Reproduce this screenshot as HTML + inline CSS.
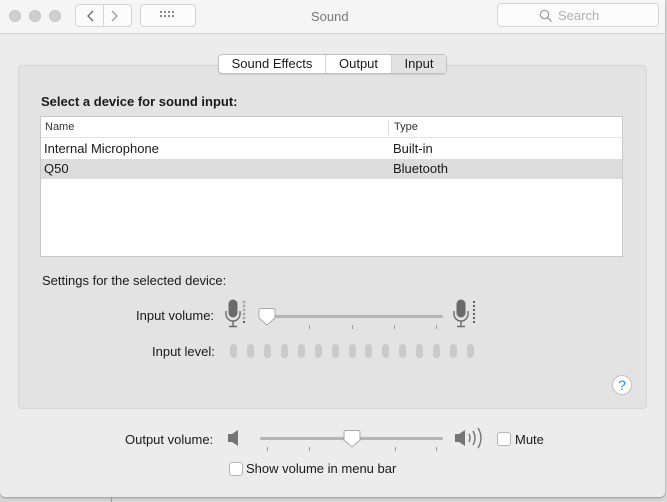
<!DOCTYPE html>
<html><head><meta charset="utf-8"><style>
*{margin:0;padding:0;box-sizing:border-box}
body{width:667px;height:502px;background:#d6d6d6;font-family:"Liberation Sans",sans-serif;font-size:13px;color:#1a1a1a;position:relative;overflow:hidden}
.win{position:absolute;left:0;top:0;width:665px;height:497px;background:#ececec;border-radius:0 0 5px 5px;box-shadow:0 1px 2px rgba(0,0,0,.3)}
.tb{position:absolute;left:0;top:0;width:665px;height:34px;background:#f5f5f5;border-bottom:1px solid #d3d3d3}
.dot{position:absolute;top:10px;width:12px;height:12px;border-radius:50%;background:#d0d0d0;border:1px solid #c4c4c4}
.btn{position:absolute;border:1px solid #d4d4d4;border-radius:4px;background:#fbfbfb}
.abs{position:absolute}
.panel{position:absolute;left:18px;top:65px;width:629px;height:344px;background:#e3e3e3;border:1px solid #d6d6d6;border-radius:4px}
.tabs{position:absolute;left:218px;top:54px;height:20px;width:229px;border:1px solid #c0c0c0;border-radius:4px;background:#fff;display:flex;box-shadow:0 1px 1px rgba(0,0,0,.1)}
.tabs div{height:18px;line-height:18px;text-align:center;font-size:13px;border-right:1px solid #d0d0d0}
.table{position:absolute;left:40px;top:116px;width:583px;height:141px;background:#fff;border:1px solid #c8c8c8}
.row{position:absolute;left:0;width:581px;height:20px;line-height:20px}
.lbl{position:absolute;font-size:13px}
.pill{position:absolute;top:344px;width:7px;height:14px;border-radius:3.5px;background:#cacaca}
.tick{position:absolute;width:1px;height:4px;background:#9a9a9a}
.cb{position:absolute;width:14px;height:14px;border:1px solid #b5b5b5;border-radius:3px;background:#fff}
</style></head><body>
<div class="win">
<div class="tb">
<div class="dot" style="left:9px"></div><div class="dot" style="left:29px"></div><div class="dot" style="left:49px"></div>
<div class="btn" style="left:75px;top:4px;width:57px;height:23px"></div>
<div class="abs" style="left:103px;top:4px;width:1px;height:23px;background:#d4d4d4"></div>
<svg class="abs" style="left:83px;top:8px" width="44" height="16"><path d="M10 3 L5 8 L10 13" stroke="#666" stroke-width="1.3" fill="none"/><path d="M29 3 L34 8 L29 13" stroke="#999" stroke-width="1.3" fill="none"/></svg>
<div class="btn" style="left:140px;top:4px;width:56px;height:23px"></div>
<svg class="abs" style="left:160px;top:11px" width="16" height="10"><g fill="#888"><rect x="0" y="0" width="2" height="2"/><rect x="4" y="0" width="2" height="2"/><rect x="8" y="0" width="2" height="2"/><rect x="12" y="0" width="2" height="2"/><rect x="0" y="4" width="2" height="2"/><rect x="4" y="4" width="2" height="2"/><rect x="8" y="4" width="2" height="2"/><rect x="12" y="4" width="2" height="2"/></g></svg>
<div class="lbl" style="left:311px;top:9px;color:#777;font-size:13px">Sound</div>
<div class="btn" style="left:497px;top:3px;width:162px;height:24px"></div>
<svg class="abs" style="left:539px;top:9px" width="14" height="14"><circle cx="5.5" cy="5.5" r="4.2" stroke="#999" stroke-width="1.2" fill="none"/><path d="M8.5 8.5 L12.5 12.5" stroke="#999" stroke-width="1.3"/></svg>
<div class="lbl" style="left:558px;top:8px;color:#b0b0b0">Search</div>
</div>
<div class="panel"></div>
<div class="tabs"><div style="width:107px">Sound Effects</div><div style="width:66px">Output</div><div style="width:54px;border:0;background:#e2e2e2">Input</div></div>
<div class="lbl" style="left:41px;top:94px;font-weight:bold">Select a device for sound input:</div>
<div class="table">
<div class="row" style="top:0;height:21px;border-bottom:1px solid #e2e2e2;font-size:11px;color:#333"><span class="abs" style="left:4px">Name</span><span class="abs" style="left:347px;top:3px;width:1px;height:15px;background:#ddd"></span><span class="abs" style="left:353px">Type</span></div>
<div class="row" style="top:22px"><span class="abs" style="left:3px">Internal Microphone</span><span class="abs" style="left:352px">Built-in</span></div>
<div class="row" style="top:42px;background:#dcdcdc"><span class="abs" style="left:3px">Q50</span><span class="abs" style="left:352px">Bluetooth</span></div>
</div>
<div class="lbl" style="left:42px;top:273px">Settings for the selected device:</div>
<div class="lbl" style="left:136px;top:308px">Input volume:</div>
<svg class="abs" style="left:224px;top:298px" width="24" height="32"><rect x="4.5" y="1.5" width="9" height="18" rx="4.5" fill="#6a6a6a"/><path d="M2 13 v3 a7 7 0 0 0 14 0 v-3" stroke="#6a6a6a" stroke-width="1.4" fill="none"/><path d="M9 23 v5 M5 28.5 h8" stroke="#6a6a6a" stroke-width="1.4"/><g fill="none" stroke="#999" stroke-width="0.8"><circle cx="20" cy="4" r="1"/><circle cx="20" cy="8" r="1"/><circle cx="20" cy="12" r="1"/><circle cx="20" cy="16" r="1"/><circle cx="20" cy="20" r="1"/></g><circle cx="20" cy="24" r="1.1" fill="#555"/></svg>
<svg class="abs" style="left:452px;top:298px" width="26" height="32"><rect x="4.5" y="1.5" width="9" height="18" rx="4.5" fill="#6a6a6a"/><path d="M2 13 v3 a7 7 0 0 0 14 0 v-3" stroke="#6a6a6a" stroke-width="1.4" fill="none"/><path d="M9 23 v5 M5 28.5 h8" stroke="#6a6a6a" stroke-width="1.4"/><g fill="#555"><circle cx="22" cy="4" r="1.1"/><circle cx="22" cy="8" r="1.1"/><circle cx="22" cy="12" r="1.1"/><circle cx="22" cy="16" r="1.1"/><circle cx="22" cy="20" r="1.1"/><circle cx="22" cy="24" r="1.1"/></g></svg>
<div class="abs" style="left:262px;top:315px;width:181px;height:3px;border-radius:2px;background:#b5b5b5"></div>
<div class="tick" style="left:309px;top:325px"></div><div class="tick" style="left:352px;top:325px"></div><div class="tick" style="left:394px;top:325px"></div><div class="tick" style="left:436px;top:325px"></div>
<svg class="abs" style="left:258px;top:306px" width="20" height="22"><path d="M2.5 2.5 h13 a1.5 1.5 0 0 1 1.5 1.5 v8 l-8 7 l-8 -7 v-8 a1.5 1.5 0 0 1 1.5 -1.5z" fill="#fff" stroke="#aaa"/></svg>
<div class="lbl" style="left:152px;top:344px">Input level:</div>
<div class="pill" style="left:230px"></div><div class="pill" style="left:247px"></div><div class="pill" style="left:264px"></div><div class="pill" style="left:281px"></div><div class="pill" style="left:298px"></div><div class="pill" style="left:315px"></div><div class="pill" style="left:332px"></div><div class="pill" style="left:349px"></div><div class="pill" style="left:365px"></div><div class="pill" style="left:382px"></div><div class="pill" style="left:399px"></div><div class="pill" style="left:416px"></div><div class="pill" style="left:433px"></div><div class="pill" style="left:450px"></div><div class="pill" style="left:467px"></div>
<div class="abs" style="left:612px;top:375px;width:20px;height:20px;border-radius:50%;background:#fff;border:1px solid #c2c2c2;color:#1a8cff;text-align:center;line-height:18px;font-size:14px">?</div>
<div class="lbl" style="left:125px;top:432px">Output volume:</div>
<svg class="abs" style="left:226px;top:428px" width="18" height="20"><path d="M2 6 h4 l6 -4 v16 l-6 -4 h-4z" fill="#757575"/></svg>
<svg class="abs" style="left:452px;top:425px" width="38" height="26"><path d="M3 9 h4 l6 -4 v16 l-6 -4 h-4z" fill="#757575"/><path d="M17 9 q2 4 0 8 M21 6 q4 7 0 14 M26 3 q6 10 0 20" stroke="#757575" stroke-width="1.4" fill="none"/></svg>
<div class="abs" style="left:260px;top:437px;width:183px;height:3px;border-radius:2px;background:#b5b5b5"></div>
<div class="tick" style="left:267px;top:447px"></div><div class="tick" style="left:309px;top:447px"></div><div class="tick" style="left:395px;top:447px"></div><div class="tick" style="left:436px;top:447px"></div>
<svg class="abs" style="left:343px;top:428px" width="20" height="22"><path d="M2.5 2.5 h13 a1.5 1.5 0 0 1 1.5 1.5 v8 l-8 7 l-8 -7 v-8 a1.5 1.5 0 0 1 1.5 -1.5z" fill="#fff" stroke="#aaa"/></svg>
<div class="cb" style="left:497px;top:432px"></div><div class="lbl" style="left:515px;top:432px">Mute</div>
<div class="cb" style="left:229px;top:462px"></div><div class="lbl" style="left:246px;top:461px">Show volume in menu bar</div>
</div>
<div class="abs" style="left:111px;top:497px;width:1px;height:5px;background:#999"></div>
</body></html>
